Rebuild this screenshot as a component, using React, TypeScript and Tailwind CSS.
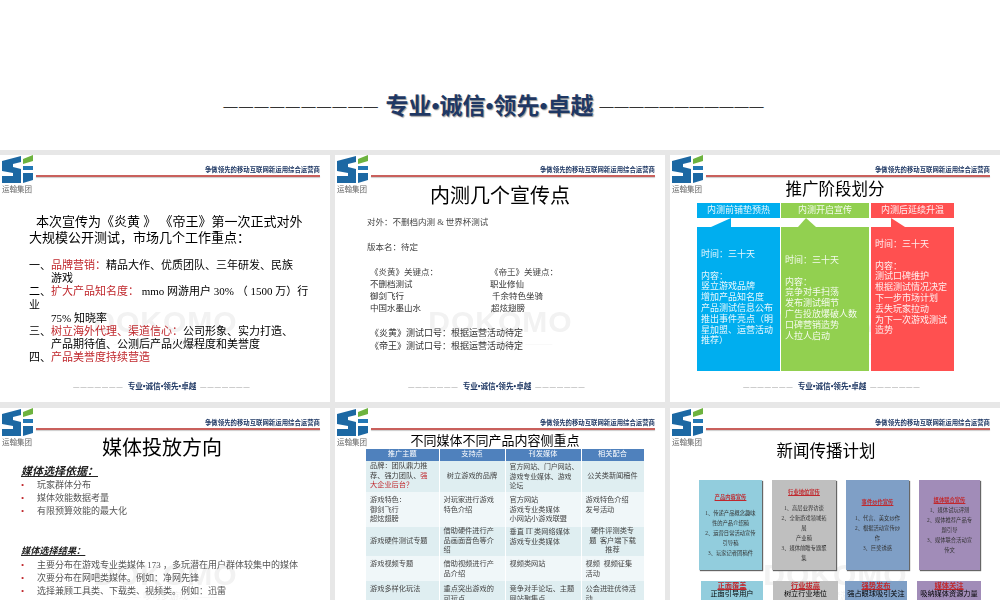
function Logo() {
  return (
    <div className="w-[36px] shrink-0 pl-[2px]">
      <svg width="31" height="28" viewBox="0 0 31 28" className="block">
        <path d="M0 6 L19 1 V7 L11 9 V12 L19 14 V28 L0 28 V21 L11 21 V18 L0 16 Z" fill="#1c68a3" />
        <path d="M21 4 L31 0 V6 L21 9 Z" fill="#6db33f" />
        <path d="M21 11 H31 V15 H21 Z" fill="#2378b5" />
        <path d="M21 18 H31 V25 L21 28 Z" fill="#1c68a3" />
      </svg>
      <div className="mt-[2px] whitespace-nowrap text-[7.5px] leading-[9px] text-[#666]">运翰集团</div>
    </div>
  );
}

function SlideHeader() {
  return (
    <div className="flex h-[38px] shrink-0">
      <Logo />
      <div className="flex-1 pr-[10px] pt-[11px]">
        <div className="text-right text-[6.4px] font-bold leading-[8px] text-[#1f3864]">
          争做领先的移动互联网新运用综合运营商
        </div>
        <div className="mt-[1px] h-[2px] bg-[#c9605c] shadow-[0_1px_1px_#ccc]" />
      </div>
    </div>
  );
}

function SlideFooter() {
  return (
    <div className="mt-auto flex items-center justify-center gap-[4px] pb-[10px] pr-[6px] text-[7.6px] font-bold leading-[10px] text-[#1f3864]">
      <span className="whitespace-nowrap text-[6px] font-normal tracking-[1.2px] text-[#666]">———————</span>
      <span>专业•诚信•领先•卓越</span>
      <span className="whitespace-nowrap text-[6px] font-normal tracking-[1.2px] text-[#666]">———————</span>
    </div>
  );
}

function Watermark() {
  return (
    <div className="pointer-events-none absolute left-[93px] top-[152px] w-[145px] text-center text-[#f2f2f2]">
      <div className="text-[30px] font-bold leading-[30px] tracking-[1px] [font-family:'Liberation_Sans',sans-serif]">DOKOMO</div>
      <div className="mt-[1px] whitespace-nowrap text-[9px] leading-[10px]">——— 哆可梦游戏 ———</div>
    </div>
  );
}

function Slide({ children }: { children: React.ReactNode }) {
  return (
    <div className="relative flex h-[247px] flex-col overflow-hidden bg-white blur-[0.3px]">
      <Watermark />
      <SlideHeader />
      <div className="relative flex min-h-0 flex-1 flex-col">{children}</div>
      <SlideFooter />
    </div>
  );
}

function Red({ children }: { children: React.ReactNode }) {
  return <span className="text-[#c0282d]">{children}</span>;
}

function SlideOne() {
  return (
    <div className="pl-[29px] pt-[21px] text-black">
      <div className="text-[13px] leading-[15.5px]">
        <div className="whitespace-pre pl-[7px]">本次宣传为《炎黄 》 《帝王》第一次正式对外</div>
        <div>大规模公开测试，市场几个工作重点：</div>
      </div>
      <div className="mt-[14px] whitespace-nowrap text-[11px] leading-[13.2px]">
        <div>一、<Red>品牌营销：</Red>精品大作、优质团队、三年研发、民族</div>
        <div className="pl-[22px]">游戏</div>
        <div>二、<Red>扩大产品知名度：</Red> mmo 网游用户 30% （ 1500 万）行</div>
        <div>业</div>
        <div className="pl-[22px]">75% 知晓率</div>
        <div>三、<Red>树立海外代理、渠道信心：</Red>公司形象、实力打造、</div>
        <div className="pl-[22px]">产品期待值、公测后产品火爆程度和美誉度</div>
        <div>四、<Red>产品美誉度持续营造</Red></div>
      </div>
    </div>
  );
}

function SlideTwo() {
  return (
    <>
      <h2 className="-mt-[11px] text-center text-[20px] leading-[28px] text-black">内测几个宣传点</h2>
      <div className="mt-[6px] pl-[32px] text-[8.5px] leading-[12px] text-[#444]">
        <div>对外：不删档内测 &amp; 世界杯测试</div>
        <div className="mt-[13px]">版本名：待定</div>
        <div className="mt-[13px] grid grid-cols-[120px_1fr] pl-[3px] text-[#333]">
          <div className="text-[#444]">《炎黄》关键点：</div>
          <div className="text-[#444]">《帝王》关键点：</div>
          <div>不删档测试</div>
          <div>职业修仙</div>
          <div>御剑飞行</div>
          <div className="pl-[2px]">千余特色坐骑</div>
          <div>中国水墨山水</div>
          <div className="pl-[1px]">超炫翅膀</div>
        </div>
        <div className="mt-[13px] pl-[3px] text-[9px] leading-[13px] text-[#333]">
          <div>《炎黄》测试口号：根据运营活动待定</div>
          <div>《帝王》测试口号：根据运营活动待定</div>
        </div>
      </div>
    </>
  );
}

const phases = [
  {
    head: "内测前铺垫预热",
    headClass: "w-[83px] bg-[#00aeef]",
    bodyClass: "bg-[#00aeef] pt-[22px]",
    notch: "34,0 34,9 14,9",
    fill: "#00aeef",
    lines: ["时间：三十天", "", "内容：", "竖立游戏品牌", "增加产品知名度", "产品测试信息公布", "推出事件亮点（明", "星加盟、运营活动", "推荐）"],
  },
  {
    head: "内测开启宣传",
    headClass: "w-[88px] bg-[#92d050]",
    bodyClass: "bg-[#92d050] pt-[28px]",
    notch: "17,9 25,0 35,9",
    fill: "#92d050",
    lines: ["时间：三十天", "", "内容：", "竞争对手扫荡", "发布测试细节", "广告投放爆破人数", "口碑营销造势", "人拉人启动"],
  },
  {
    head: "内测后延续升温",
    headClass: "w-[83px] bg-[#ff5050]",
    bodyClass: "bg-[#ff5050] pt-[12px]",
    notch: "20,0 34,9 20,9",
    fill: "#ff5050",
    lines: ["时间：三十天", "", "内容：", "测试口碑维护", "根据测试情况决定", "下一步市场计划", "丢失玩家拉动", "为下一次游戏测试", "造势"],
  },
];

function SlideThree() {
  return (
    <>
      <h2 className="-mt-[13px] text-center text-[16.5px] leading-[20px] text-black">推广阶段划分</h2>
      <div className="ml-[27px] mt-[3px] flex">
        {phases.map((p, i) => (
          <div key={p.head} className={i === 1 ? "ml-[1px] mr-[2px]" : ""}>
            <div className={`${p.headClass} h-[15px] text-center text-[9px] leading-[15px] text-white/90`}>{p.head}</div>
            <div className="relative h-[9px]">
              <svg width="83" height="9" className="absolute left-0 top-0">
                <polygon points={p.notch} fill={p.fill} />
              </svg>
            </div>
            <div className={`${p.bodyClass} h-[144px] pl-[4px] text-[9px] leading-[10.8px] text-white/90`}>
              {p.lines.map((l, j) => (
                <div key={j} className="h-[10.8px] whitespace-nowrap">{l}</div>
              ))}
            </div>
          </div>
        ))}
      </div>
    </>
  );
}

function SlideFour() {
  const first = ["玩家群体分布", "媒体效能数据考量", "有限预算效能的最大化"];
  const second = ["主要分布在游戏专业类媒体 173 ，多玩潜在用户群体较集中的媒体", "次要分布在网吧类媒体。例如：净网先锋", "选择兼顾工具类、下载类、视频类。例如：迅雷"];
  const bulletList = (items: string[]) =>
    items.map((t) => (
      <div key={t} className="flex h-[13px] whitespace-nowrap text-[9px] leading-[13px] text-[#555]">
        <span className="w-[16px] text-[#c0282d]">•</span>
        {t}
      </div>
    ));
  return (
    <>
      <h2 className="-mt-[11px] pr-[6px] text-center text-[20px] leading-[26px] text-black">媒体投放方向</h2>
      <div className="mt-[3px] pl-[21px]">
        <div className="text-[11px] font-bold italic leading-[14px] text-[#222] underline">媒体选择依据：</div>
        <div className="mt-[1px]">{bulletList(first)}</div>
        <div className="mt-[26px] text-[9.2px] font-bold italic leading-[14px] text-[#222] underline">媒体选择结果：</div>
        <div className="mt-[1px]">{bulletList(second)}</div>
      </div>
    </>
  );
}

function SlideFive() {
  const head = "bg-[#4f81bd] text-center text-white border-r border-white";
  const cell = "align-top px-[4px] pt-[4px] border-r border-white";
  return (
    <>
      <h2 className="-mt-[14px] pr-[10px] text-center text-[13px] leading-[18px] text-black">不同媒体不同产品内容侧重点</h2>
      <table className="-mt-[1px] ml-[31px] w-[278px] table-fixed border-collapse text-[7.2px] leading-[9.6px] text-[#444]">
        <colgroup>
          <col className="w-[73px]" />
          <col className="w-[66px]" />
          <col className="w-[76px]" />
          <col className="w-[63px]" />
        </colgroup>
        <thead>
          <tr className="h-[12px]">
            <th className={`${head} font-normal`}>推广主题</th>
            <th className={`${head} font-normal`}>支持点</th>
            <th className={`${head} font-normal`}>刊发媒体</th>
            <th className={`${head} font-normal`}>相关配合</th>
          </tr>
        </thead>
        <tbody>
          <tr className="h-[31px] bg-[#dfeef1]">
            <td className={`${cell} !align-middle !pt-0`}>品牌：团队鼎力推<br />荐、强力团队、<Red>强</Red><br /><Red>大企业后台？</Red></td>
            <td className={`${cell} !align-middle !pt-0 text-center`}>树立游戏的品牌</td>
            <td className={`${cell} !align-middle !pt-0 !pr-0 whitespace-nowrap text-[6.9px]`}>官方网站、门户网站、<br />游戏专业媒体、游戏<br />论坛</td>
            <td className={`${cell} !align-middle !pt-0 text-center`}>公关类新闻稿件</td>
          </tr>
          <tr className="h-[35px] bg-[#f0f7f9]">
            <td className={cell}>游戏特色：<br />御剑飞行<br />超炫翅膀</td>
            <td className={cell}>对玩家进行游戏<br />特色介绍</td>
            <td className={cell}>官方网站<br />游戏专业类媒体<br />小网站小游戏联盟</td>
            <td className={cell}>游戏特色介绍<br />发号活动</td>
          </tr>
          <tr className="h-[29px] bg-[#dfeef1]">
            <td className={`${cell} !align-middle !pt-0`}>游戏硬件测试专题</td>
            <td className={`${cell} !pt-0`}>借助硬件进行产<br />品画面音色等介<br />绍</td>
            <td className={`${cell} !pt-[1px]`}>垂直 IT 类网络媒体<br />游戏专业类媒体</td>
            <td className={`${cell} !pt-0 text-center`}>硬件评测类专<br />题&nbsp;&nbsp;客户端下载<br />推荐</td>
          </tr>
          <tr className="h-[25px] bg-[#f0f7f9]">
            <td className={cell}>游戏视频专题</td>
            <td className={cell}>借助视频进行产<br />品介绍</td>
            <td className={cell}>视频类网站</td>
            <td className={cell}>视频&nbsp;&nbsp;视频征集<br />活动</td>
          </tr>
          <tr className="h-[30px] bg-[#dfeef1]">
            <td className={cell}>游戏多样化玩法</td>
            <td className={cell}>重点突出游戏的<br />可玩点</td>
            <td className={cell}>竞争对手论坛、主题<br />网站聚集点</td>
            <td className={cell}>公会进驻优待活<br />动</td>
          </tr>
        </tbody>
      </table>
    </>
  );
}

const newsBoxes = [
  { title: "产品内容宣传", className: "w-[63px] bg-[#92cddd] pt-[12px]", titleClass: "mb-[6px]", lines: ["1、传递产品概念趣味", "性的产品介绍稿", "2、运营日常活动宣传", "引导稿", "3、玩家记者团稿件"] },
  { title: "行业地位宣传", className: "w-[64px] bg-[#bfbfbf] pt-[7px]", titleClass: "mb-[6px]", lines: ["1、高层业界访谈", "2、全新游戏领域拓", "展", "产业稿", "3、媒体前瞻专题聚", "集"] },
  { title: "事件炒作宣传", className: "w-[63px] bg-[#7f9fc6] pt-[17px]", titleClass: "mb-[6px]", lines: ["1、代言、美女炒作", "2、根据活动宣传炒", "作", "3、巨奖诱惑"] },
  { title: "媒体联合宣传", className: "w-[61px] bg-[#a18cb8] pt-[15px]", titleClass: "", lines: ["1、媒体试玩评测", "2、媒体推荐产品专", "题引导", "3、媒体联合活动宣", "传文"] },
];

const newsTags = [
  { title: "正面覆盖", text: "正面引导用户", className: "w-[62px] ml-[2px] bg-[#92cddd]" },
  { title: "行业拔高", text: "树立行业地位", className: "w-[65px] ml-[10px] bg-[#bfbfbf]" },
  { title: "强势发布", text: "强占眼球吸引关注", className: "w-[62px] ml-[7px] bg-[#7f9fc6]" },
  { title: "媒体关注", text: "吸纳媒体资源力量", className: "w-[64px] ml-[10px] bg-[#a18cb8]" },
];

function SlideSix() {
  return (
    <>
      <h2 className="-mt-[4px] pr-[18px] text-center text-[16.5px] leading-[20px] text-black">新闻传播计划</h2>
      <div className="ml-[29px] mt-[18px] flex gap-[10px]">
        {newsBoxes.map((b) => (
          <div key={b.title} className={`${b.className} h-[90px] px-[2px] text-center text-[5.3px] leading-[10px] text-[#333] shadow-[1px_1px_1px_#666]`}>
            <div className={`${b.titleClass} font-bold text-[#c0282d] underline`}>{b.title}</div>
            {b.lines.map((l) => (
              <div key={l}>{l}</div>
            ))}
          </div>
        ))}
      </div>
      <div className="ml-[29px] mt-[11px] flex">
        {newsTags.map((t) => (
          <div key={t.title} className={`${t.className} h-[30px] text-center text-[7.2px] leading-[9px] text-black`}>
            <div className="text-[7.3px] font-bold text-[#c0282d] underline">{t.title}</div>
            <div className="whitespace-nowrap">{t.text}</div>
          </div>
        ))}
      </div>
    </>
  );
}

export default function App() {
  return (
    <div className="h-[600px] overflow-hidden bg-[#e7e7e7] [font-family:'Liberation_Serif','Noto_Sans_CJK_SC',serif]">
      <div className="flex h-[150px] items-start justify-center gap-[6px] bg-white pr-[12px] pt-[93px] font-bold text-[#1f3864]">
        <span className="whitespace-nowrap text-[14px] leading-[28px] tracking-[1.6px] text-[#333]">——————————</span>
        <span className="whitespace-nowrap text-[23px] leading-[28px] [text-shadow:1px_1px_1px_#999]">专业•诚信•领先•卓越</span>
        <span className="whitespace-nowrap text-[14px] leading-[28px] tracking-[1px] text-[#333]">———————————</span>
      </div>
      <div className="grid grid-cols-3 gap-x-[5px] gap-y-[6px] pt-[5px]">
        <Slide><SlideOne /></Slide>
        <Slide><SlideTwo /></Slide>
        <Slide><SlideThree /></Slide>
        <Slide><SlideFour /></Slide>
        <Slide><SlideFive /></Slide>
        <Slide><SlideSix /></Slide>
      </div>
    </div>
  );
}
